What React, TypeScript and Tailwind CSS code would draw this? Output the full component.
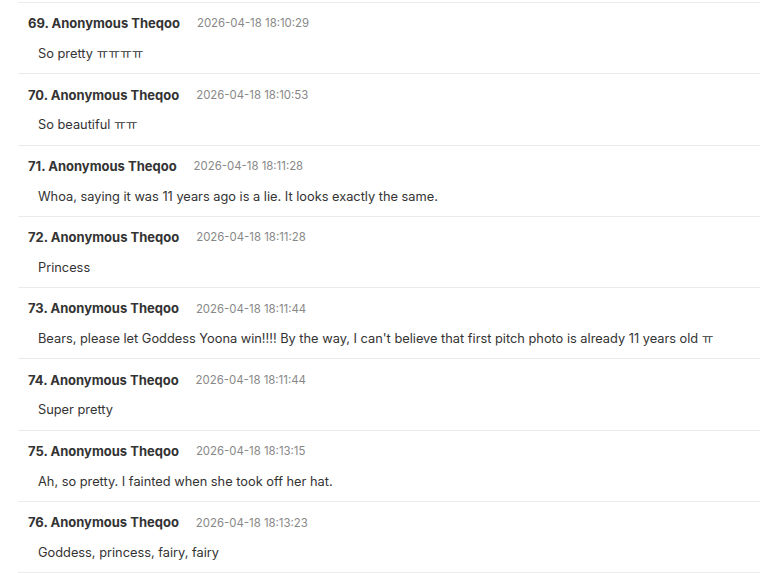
const comments = [
  { n: 69, time: '2026-04-18 18:10:29', text: 'So pretty ㅠㅠㅠㅠ' },
  { n: 70, time: '2026-04-18 18:10:53', text: 'So beautiful ㅠㅠ' },
  { n: 71, time: '2026-04-18 18:11:28', text: 'Whoa, saying it was 11 years ago is a lie. It looks exactly the same.' },
  { n: 72, time: '2026-04-18 18:11:28', text: 'Princess' },
  { n: 73, time: '2026-04-18 18:11:44', text: "Bears, please let Goddess Yoona win!!!! By the way, I can't believe that first pitch photo is already 11 years old ㅠ" },
  { n: 74, time: '2026-04-18 18:11:44', text: 'Super pretty' },
  { n: 75, time: '2026-04-18 18:13:15', text: 'Ah, so pretty. I fainted when she took off her hat.' },
  { n: 76, time: '2026-04-18 18:13:23', text: 'Goddess, princess, fairy, fairy' },
];

export default function App() {
  return (
    <div className="min-h-screen bg-white pl-[18px] pt-[2px] font-['Inter','Noto_Sans_CJK_KR',sans-serif]">
      <ul className="border-t border-[#ebebeb]">
        {comments.map((c) => (
          <li key={c.n} className="border-b border-[#ebebeb] px-[10px] pt-[13px] pb-[9.3px]">
            <div className="flex items-center gap-[17px] h-[16px]">
              <span className="text-[13px] font-bold text-[#333]">{c.n}. Anonymous Theqoo</span>
              <span className="text-[11.4px] text-[#888]">{c.time}</span>
            </div>
            <p className="mt-[12px] pl-[10px] text-[12.8px] leading-[20px] text-[#333]">{c.text}</p>
          </li>
        ))}
      </ul>
    </div>
  );
}
